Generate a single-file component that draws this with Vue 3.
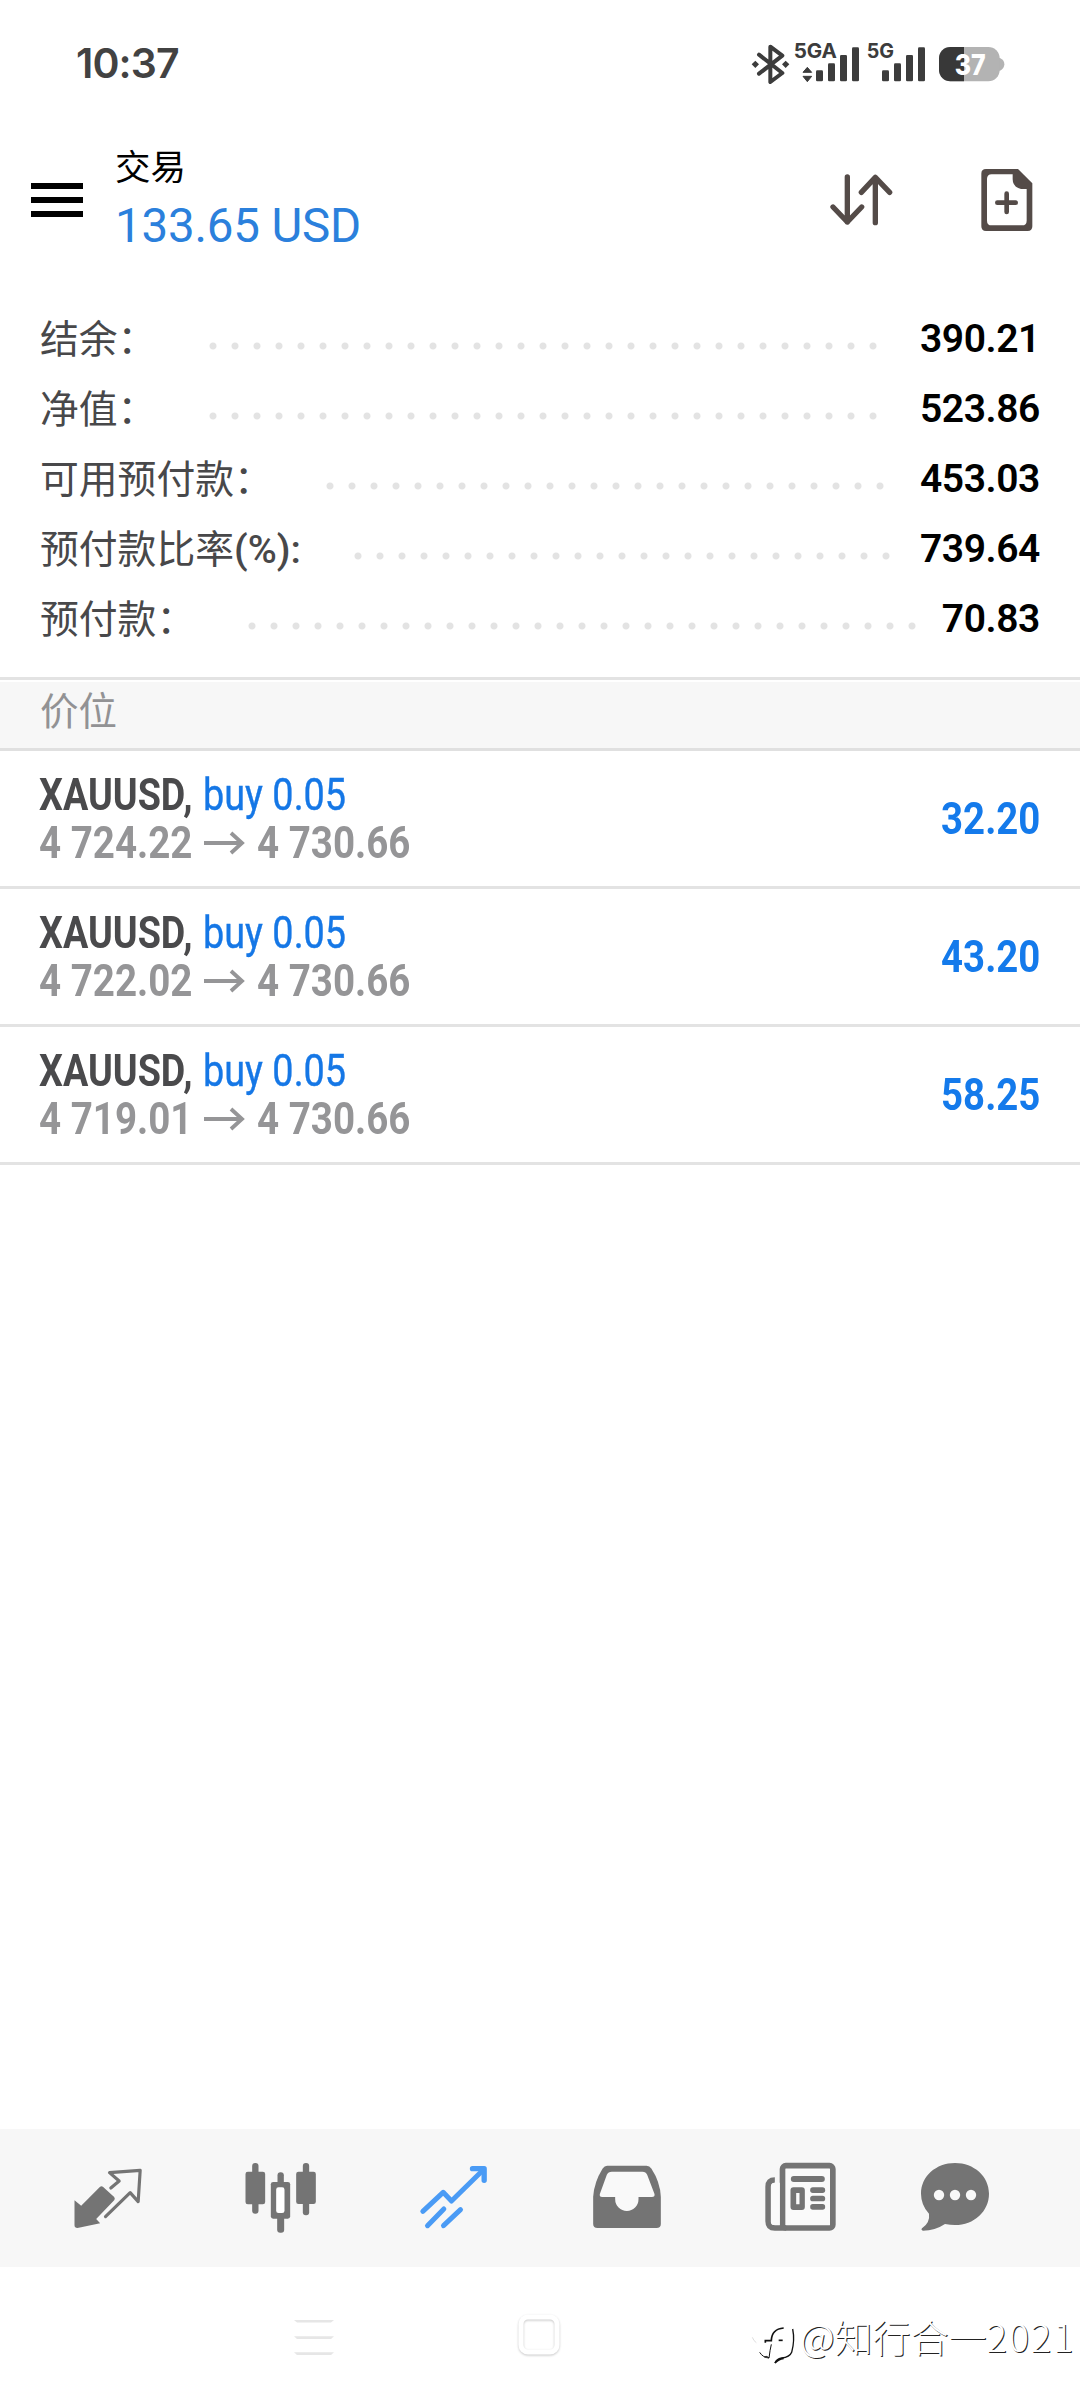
<script setup>
const summary = [
  { label: '结余：', value: '390.21', dots: 31 },
  { label: '净值：', value: '523.86', dots: 31 },
  { label: '可用预付款：', value: '453.03', dots: 26 },
  { label: '预付款比率', suffix: '(%):', value: '739.64', dots: 25 },
  { label: '预付款：', value: '70.83', dots: 31 },
]

const positions = [
  { symbol: 'XAUUSD,', side: 'buy 0.05', open: '4 724.22', current: '4 730.66', profit: '32.20' },
  { symbol: 'XAUUSD,', side: 'buy 0.05', open: '4 722.02', current: '4 730.66', profit: '43.20' },
  { symbol: 'XAUUSD,', side: 'buy 0.05', open: '4 719.01', current: '4 730.66', profit: '58.25' },
]

const DOT_PITCH = 22
</script>

<template>
  <div class="screen">
    <div class="status">
      <span class="time">10:37</span>
      <svg class="status-icons" viewBox="90 50 780 150" width="260" height="50">
        <g fill="none" stroke="#3c3c3c" stroke-width="12" stroke-linejoin="round" stroke-linecap="round">
          <path d="M117 100 L187 155 L151 182 V76 L187 103 L117 157" />
        </g>
        <g fill="#3c3c3c">
          <path d="M106 118 l11 11 l-11 11 l-11 -11z M197 118 l11 11 l-11 11 l-11 -11z" />
          <text x="221" y="110" class="net" textLength="130" lengthAdjust="spacingAndGlyphs">5GA</text>
          <path d="M249 153 L262 138 L275 153z M249 165 L262 181 L275 165z" stroke="#3c3c3c" stroke-width="3" stroke-linejoin="round" />
          <rect x="288" y="147" width="21" height="33" rx="4" />
          <rect x="324" y="126" width="21" height="54" rx="4" />
          <rect x="360" y="101" width="21" height="79" rx="4" />
          <rect x="396" y="78" width="21" height="102" rx="4" />
          <text x="440" y="110" class="net" textLength="82" lengthAdjust="spacingAndGlyphs">5G</text>
          <rect x="486" y="147" width="21" height="33" rx="4" />
          <rect x="522" y="126" width="21" height="54" rx="4" />
          <rect x="558" y="101" width="21" height="79" rx="4" />
          <rect x="594" y="78" width="21" height="102" rx="4" />
        </g>
        <path d="M830 110 h10 q13 6 13 19 q0 13 -13 19 h-10z" fill="#b3b3b3" />
        <rect x="657" y="77" width="182" height="103" rx="34" fill="#b3b3b3" />
        <path d="M732 77 H691 A34 34 0 0 0 657 111 V146 A34 34 0 0 0 691 180 H732z" fill="#383838" />
        <text x="704" y="160" class="battery" textLength="93" lengthAdjust="spacingAndGlyphs">37</text>
      </svg>
    </div>

    <header class="header">
      <div class="menu"><i></i><i></i><i></i></div>
      <div class="titles">
        <div class="title">交易</div>
        <div class="total">133.65 USD</div>
      </div>
      <svg class="sort" viewBox="320 450 210 180" width="70" height="60">
        <g fill="none" stroke="#544b48" stroke-width="16" stroke-linecap="round" stroke-linejoin="round">
          <path d="M381 471 V606 M338 561 L381 606 L424 561" />
          <path d="M465 608 V472 M423 517 L465 472 L508 517" />
        </g>
      </svg>
      <svg class="new-order" viewBox="775 435 174 210" width="58" height="70">
        <path fill="#544b48" fill-rule="evenodd" d="M799 447 H895 L938 490 V619 Q938 633 924 633 H799 Q785 633 785 619 V461 Q785 447 799 447z M816 463 Q802 463 802 477 V602 Q802 616 816 616 H907 Q921 616 921 602 V507 H904 Q879 501 879 478 V463z" />
        <path d="M861 521 V576 M833 548 H888" stroke="#544b48" stroke-width="14" stroke-linecap="round" />
      </svg>
    </header>

    <section class="summary">
      <div v-for="row in summary" :key="row.label" class="summary-row">
        <div class="label">{{ row.label }}<b v-if="row.suffix">{{ row.suffix }}</b></div>
        <span class="dots" :style="{ width: row.dots * DOT_PITCH + 'px' }"></span>
        <span class="value">{{ row.value }}</span>
      </div>
    </section>

    <div class="section-head"><span>价位</span></div>

    <div v-for="(p, i) in positions" :key="i" class="position">
      <div class="info">
        <div class="line">
          <span class="symbol">{{ p.symbol }}</span>
          <span class="side">{{ p.side }}</span>
        </div>
        <div class="line prices">
          <span class="price">{{ p.open }}</span>
          <svg class="arrow" viewBox="0 0 41 24" width="41" height="24">
            <path d="M0 12 H38 M27 2 L38 12 L27 22" fill="none" stroke="#959597" stroke-width="3.8" />
          </svg>
          <span class="price">{{ p.current }}</span>
        </div>
      </div>
      <div class="profit"><span>{{ p.profit }}</span></div>
    </div>

    <div class="spacer"></div>

    <nav class="tabs">
      <div class="tab">
        <svg viewBox="25.5 24 300 300" width="100" height="100">
          <path d="M75 181 L95 197 L151 141 Q156 136 161 141 L194 171 Q198 176 194 181 L140 237 L152 250 L84 264 Q75 264 75 256z" fill="#747474" />
          <path d="M184 144 L209 123 L180 98 L272 91 L266 185 L242 158 L168 230" fill="none" stroke="#747474" stroke-width="9.5" stroke-linejoin="round" stroke-linecap="round" />
        </svg>
      </div>
      <div class="tab">
        <svg viewBox="544.5 24 300 300" width="100" height="100">
          <g fill="#747474">
            <rect x="608" y="69" width="19" height="152" rx="9" />
            <rect x="588" y="95" width="59" height="98" rx="7" />
            <rect x="760" y="69" width="19" height="157" rx="9" />
            <rect x="740" y="95" width="59" height="97" rx="7" />
            <rect x="684" y="97" width="19" height="50" rx="9" />
            <rect x="683" y="220" width="21" height="58" rx="9" />
            <rect x="664" y="126" width="58" height="110" rx="7" />
          </g>
          <rect x="680" y="142" width="25" height="77" rx="7" fill="#fff" />
        </svg>
      </div>
      <div class="tab">
        <svg viewBox="13.5 24 300 300" width="100" height="100">
          <g fill="none" stroke="#4a9bf5" stroke-width="15" stroke-linecap="round" stroke-linejoin="round">
            <path d="M70 214 L131 157 L156 183 L250 91" />
            <path d="M219 86 H254 V121" stroke-width="16" />
            <path d="M84 257 L133 207 M132 257 L183 209" />
          </g>
        </svg>
      </div>
      <div class="tab">
        <svg viewBox="532.5 24 300 300" width="100" height="100">
          <path fill="#747474" d="M623 77 H741 Q750 77 756 86 Q782 126 784 170 V251 Q784 264 771 264 H594 Q581 264 581 251 V170 Q584 126 609 86 Q615 77 623 77z" />
          <path fill="#f9f9f9" d="M637 95 H729 Q739 95 743 104 L765 162 Q767 171 757 171 H717 V178 A35 35 0 0 1 647 178 V171 H608 Q599 171 601 162 L622 104 Q626 95 637 95z" />
        </svg>
      </div>
      <div class="tab">
        <svg viewBox="31.5 24 300 300" width="100" height="100">
          <g fill="none" stroke="#747474" stroke-width="17">
            <rect x="129" y="77" width="151" height="187" rx="10" fill="#fafafa" />
            <path d="M106 120 Q86 120 86 140 V244 Q86 264 106 264 H140" />
          </g>
          <path d="M94 140 Q94 128 106 128 H121 V255 H104 Q94 255 94 245z" fill="#fafafa" />
          <g fill="#747474">
            <rect x="154" y="108" width="102" height="18" rx="9" />
            <rect x="212" y="142" width="45" height="17" rx="8" />
            <rect x="212" y="167" width="45" height="17" rx="8" />
            <rect x="212" y="192" width="45" height="17" rx="8" />
            <path fill-rule="evenodd" d="M162 142 H187 Q196 142 196 151 V201 Q196 210 187 210 H162 Q153 210 153 201 V151 Q153 142 162 142z M170 159 V193 H180 V159z" />
          </g>
        </svg>
      </div>
      <div class="tab last">
        <svg viewBox="495 24 300 300" width="100" height="100">
          <path fill="#747474" d="M645 69 C702 69 747 109 747 161 C747 214 702 255 645 255 Q631 255 615 252 Q585 272 549 272 Q542 270 546 265 Q571 247 567 221 Q543 195 543 161 C543 109 588 69 645 69z" />
          <g fill="#f8f8f8">
            <circle cx="597" cy="165" r="15.5" />
            <circle cx="645" cy="165" r="15.5" />
            <circle cx="693" cy="165" r="15.5" />
          </g>
        </svg>
      </div>
    </nav>

    <footer class="system">
      <svg class="recents" viewBox="0 0 40 36" width="40" height="36">
        <path d="M0 0 H40 L37 2.6 H3z M0 16.3 H40 L37 18.9 H3z M0 32.3 H40 L37 34.9 H3z" fill="#e6e6e6" />
      </svg>
      <svg class="home" viewBox="0 0 50 50" width="50" height="50">
        <rect x="7" y="7" width="36" height="35" rx="7" fill="none" stroke="#fff" stroke-width="5" />
      </svg>
      <div class="watermark">
        <svg viewBox="30 530 150 150" width="50" height="50">
          <g fill="none" stroke="#111" stroke-width="5" stroke-linecap="butt">
            <path d="M79 607 V601 H97 Q98 566 134 563" />
            <path d="M119 600 H131" />
            <path d="M97 612 Q93 628 90 653 Q84 645 76 650" stroke-width="3" />
            <path d="M62 636 Q72 652 90 653" stroke-width="3" />
            <path d="M161 566 Q168 600 158 636 Q152 651 128 653 Q112 657 108 668" stroke-width="4" />
            <path d="M108 668 Q118 656 134 654" stroke-width="5" />
            <path d="M40 591 Q44 602 52 607" stroke="#ddd" stroke-width="3" />
          </g>
        </svg>
        <span class="mark-text">@知行合一<em>2021</em></span>
      </div>
    </footer>
  </div>
</template>

<style>
body {
  background: #fff;
}
</style>

<style scoped>
.screen {
  width: 1080px;
  height: 2400px;
  display: flex;
  flex-direction: column;
  overflow: hidden;
  background: #fff;
  font-family: Roboto, 'Noto Sans CJK SC', sans-serif;
}

.status {
  height: 126px;
  flex: none;
  display: flex;
  align-items: center;
  justify-content: space-between;
  padding: 0 70px 0 76px;
  box-sizing: border-box;
}

.time {
  font: 600 41px/50px Inter, sans-serif;
  color: #424242;
  letter-spacing: -0.9px;
}

.net {
  font: 700 60px Inter, sans-serif;
}

.battery {
  font: 800 87px Inter, sans-serif;
  fill: #fff;
}

.header {
  height: 148px;
  flex: none;
  display: flex;
  align-items: center;
  padding: 0 44px 0 31px;
  box-sizing: border-box;
}

.menu {
  width: 52px;
  display: flex;
  flex-direction: column;
  gap: 8px;
}

.menu i {
  height: 6px;
  background: #000;
}

.titles {
  margin-left: 32px;
  flex: 1;
}

.title {
  font: 400 35.5px/34px 'Noto Sans CJK SC', sans-serif;
  color: #000;
}

.total {
  margin-top: 18px;
  font-size: 47.5px;
  line-height: 52px;
  letter-spacing: -0.2px;
  color: #2b80dc;
  white-space: nowrap;
}

.new-order {
  margin-left: 81px;
}

.summary {
  flex: none;
  padding: 29px 40px 24px;
}

.summary-row {
  height: 70px;
  display: flex;
  align-items: center;
}

.label {
  height: 56px;
  margin-top: -4px;
  font: 400 38.8px/56px 'Noto Sans CJK SC', sans-serif;
  color: #48484a;
  white-space: nowrap;
}

.label b {
  font: 500 39.5px/40px Roboto, sans-serif;
}

.dots {
  height: 8px;
  margin: 15px 0 0 46px;
  background: radial-gradient(circle at center, #e3e3e3 3px, transparent 4px) 0 0 / 22px 8px repeat-x;
}

.value {
  margin: 2px 0 0 auto;
  font-size: 39px;
  line-height: 56px;
  font-weight: 600;
  letter-spacing: -0.4px;
  color: #000;
}

.section-head {
  height: 74px;
  flex: none;
  box-sizing: border-box;
  border-top: 3px solid #e3e3e3;
  border-bottom: 3px solid #e0e0e0;
  padding: 0 40px;
  background: linear-gradient(#fff 2px, #f7f7f7 2px);
  font: 400 38.5px/56px 'Noto Sans CJK SC', sans-serif;
  color: #929294;
}

.position {
  height: 138px;
  flex: none;
  box-sizing: border-box;
  border-bottom: 3px solid #e3e3e3;
  padding: 20px 40px 0 39px;
  display: flex;
  justify-content: space-between;
}

.line {
  height: 48px;
  display: flex;
  align-items: center;
  font-size: 44.5px;
  line-height: 48px;
  white-space: nowrap;
}

.symbol,
.side,
.price {
  transform-origin: 0 50%;
}

.symbol {
  width: 164px;
  font-weight: 700;
  color: #4a4a4c;
  transform: scaleX(0.847);
}

.side {
  color: #1577e6;
  -webkit-text-stroke: 0.4px #1577e6;
  transform: scaleX(0.85);
}

.price {
  width: 154px;
  font-weight: 700;
  color: #959597;
  transform: scaleX(0.866);
}

.arrow {
  margin: 0 12px 0 11px;
  flex: none;
}

.profit {
  margin-top: 24px;
  font-size: 45px;
  line-height: 48px;
  font-weight: 700;
  color: #147aeb;
}

.profit span {
  display: block;
  transform-origin: 100% 50%;
  transform: scaleX(0.853);
}

.spacer {
  flex: 1;
}

.tabs {
  height: 138px;
  flex: none;
  display: flex;
  padding-left: 21px;
  background: #f7f7f7;
}

.tab {
  width: 173px;
  display: flex;
  align-items: center;
  justify-content: center;
}

.last {
  width: 138px;
}

.system {
  height: 133px;
  flex: none;
  display: flex;
  align-items: flex-start;
  padding: 53px 0 0 294px;
  box-sizing: border-box;
}

.home {
  margin: -10px 0 0 180px;
  filter: drop-shadow(0 1px 1px rgba(0, 0, 0, 0.22));
}

.watermark {
  margin: -3px 0 0 185px;
  display: flex;
  align-items: flex-start;
}

.mark-text {
  margin: -6px 0 0 1px;
  font: 300 38px/50px 'Noto Sans CJK SC', sans-serif;
  color: #fff;
  text-shadow: 1px 1px 0 #222;
  white-space: nowrap;
}

.mark-text em {
  font-style: normal;
  letter-spacing: 1.8px;
}
</style>
